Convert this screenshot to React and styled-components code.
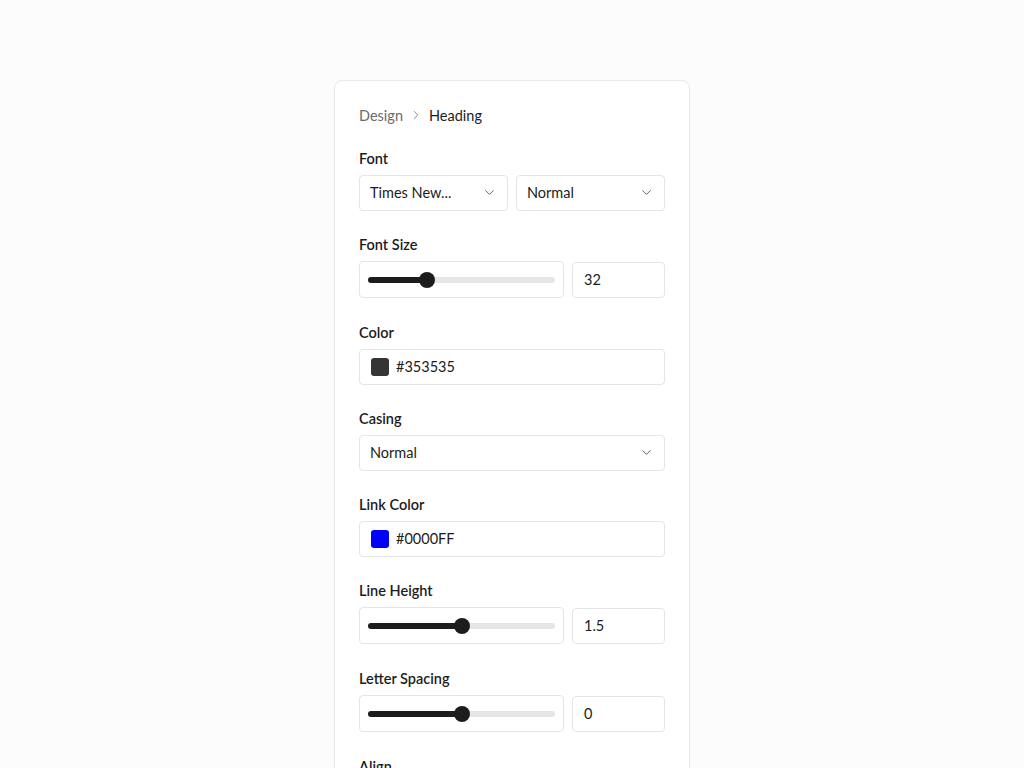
import React from "react";
import styled, { createGlobalStyle } from "styled-components";
import { ChevronDown, ChevronRight, AlignLeft, AlignCenter, AlignRight, AlignJustify } from "lucide-react";

const Global = createGlobalStyle`
  html, body { margin: 0; padding: 0; }
  body {
    background: #fcfcfc;
    font-family: "Lato", "Inter", "Noto Sans", sans-serif;
    color: #1c1c1c;
    -webkit-font-smoothing: antialiased;
  }
`;

const Page = styled.div`
  display: flex;
  justify-content: center;
  padding-top: 80px;
  min-height: 768px;
  box-sizing: border-box;
`;

const Card = styled.div`
  width: 356px;
  box-sizing: border-box;
  background: #fff;
  border: 1px solid #e8e8e8;
  border-radius: 8px;
  padding: 24px 24px 40px;
  display: flex;
  flex-direction: column;
  gap: 24px;
`;

const Crumbs = styled.nav`
  display: flex;
  align-items: center;
  gap: 6px;
  height: 20px;
  margin-bottom: -0.5px;
  font-size: 14.5px;
`;

const Crumb = styled.span`
  color: ${(p) => (p.$current ? "#1c1c1c" : "#6b6b6b")};
`;

const Section = styled.div`
  display: flex;
  flex-direction: column;
  gap: 6px;
`;

const Label = styled.div`
  font-size: 14.5px;
  font-weight: 600;
  line-height: 20px;
  color: #1c1c1c;
`;

const Row = styled.div`
  display: flex;
  gap: 8px;
  align-items: center;
  height: ${(p) => (p.$tall ? "38px" : "auto")};
`;

const SelectBox = styled.div`
  flex: ${(p) => (p.$grow ? "1 1 0" : "none")};
  height: 36px;
  box-sizing: border-box;
  border: 1px solid #e5e5e5;
  border-radius: 4px;
  background: #fff;
  display: flex;
  align-items: center;
  justify-content: space-between;
  padding: 0 10px 0 10px;
  font-size: 14.5px;
  color: #1c1c1c;
  svg { color: #555; }
`;

const InputBox = styled.div`
  flex: ${(p) => (p.$width ? `0 0 ${p.$width}px` : "none")};
  height: 36px;
  box-sizing: border-box;
  border: 1px solid #e5e5e5;
  border-radius: 4px;
  background: #fff;
  display: flex;
  align-items: center;
  gap: 7px;
  padding: 0 10px 0 11px;
  font-size: 14.5px;
  color: #1c1c1c;
`;

const Swatch = styled.span`
  width: 18px;
  height: 18px;
  border-radius: 3px;
  background: ${(p) => p.$color};
  flex: 0 0 auto;
`;

const SliderBox = styled.div`
  flex: 1 1 0;
  height: 37px;
  box-sizing: border-box;
  border: 1px solid #e5e5e5;
  border-radius: 4px;
  background: #fff;
  display: flex;
  align-items: center;
  padding: 0 8px;
`;

const Track = styled.div`
  position: relative;
  flex: 1;
  height: 6px;
  border-radius: 3px;
  background: #e6e6e6;
`;

const Fill = styled.div`
  position: absolute;
  left: 0;
  top: 0;
  bottom: 0;
  border-radius: 3px;
  background: #1c1c1c;
`;

const Thumb = styled.div`
  position: absolute;
  top: 50%;
  width: 16px;
  height: 16px;
  margin-left: -8px;
  margin-top: -8px;
  border-radius: 50%;
  background: #1c1c1c;
`;

const AlignGroup = styled.div`
  display: flex;
  gap: 8px;
`;

const AlignBtn = styled.div`
  flex: 1;
  height: 36px;
  border: 1px solid #e5e5e5;
  border-radius: 4px;
  display: flex;
  align-items: center;
  justify-content: center;
  background: ${(p) => (p.$active ? "#1c1c1c" : "#fff")};
  color: ${(p) => (p.$active ? "#fff" : "#1c1c1c")};
`;

function Select({ value, grow }) {
  return (
    <SelectBox $grow={grow}>
      <span>{value}</span>
      <ChevronDown size={15} strokeWidth={1.5} />
    </SelectBox>
  );
}

function Slider({ pct, value }) {
  // thumb centre travels from 8px to (width - 8px)
  const left = `calc(8px + (100% - 16px) * ${pct})`;
  return (
    <Row $tall>
      <SliderBox>
        <Track>
          <Fill style={{ width: left }} />
          <Thumb style={{ left }} />
        </Track>
      </SliderBox>
      <InputBox $width={93}>{value}</InputBox>
    </Row>
  );
}

export default function App() {
  return (
    <>
      <Global />
      <Page>
        <Card>
          <Crumbs>
            <Crumb>Design</Crumb>
            <ChevronRight size={14} strokeWidth={1.5} color="#777" />
            <Crumb $current>Heading</Crumb>
          </Crumbs>

          <Section>
            <Label>Font</Label>
            <Row>
              <Select grow value="Times New..." />
              <Select grow value="Normal" />
            </Row>
          </Section>

          <Section>
            <Label>Font Size</Label>
            <Slider pct={0.3} value="32" />
          </Section>

          <Section>
            <Label>Color</Label>
            <InputBox>
              <Swatch $color="#353535" />
              #353535
            </InputBox>
          </Section>

          <Section>
            <Label>Casing</Label>
            <Select value="Normal" />
          </Section>

          <Section>
            <Label>Link Color</Label>
            <InputBox>
              <Swatch $color="#0000FF" />
              #0000FF
            </InputBox>
          </Section>

          <Section>
            <Label>Line Height</Label>
            <Slider pct={0.5} value="1.5" />
          </Section>

          <Section>
            <Label>Letter Spacing</Label>
            <Slider pct={0.5} value="0" />
          </Section>

          <Section>
            <Label>Align</Label>
            <AlignGroup>
              <AlignBtn $active><AlignLeft size={16} /></AlignBtn>
              <AlignBtn><AlignCenter size={16} /></AlignBtn>
              <AlignBtn><AlignRight size={16} /></AlignBtn>
              <AlignBtn><AlignJustify size={16} /></AlignBtn>
            </AlignGroup>
          </Section>
        </Card>
      </Page>
    </>
  );
}
